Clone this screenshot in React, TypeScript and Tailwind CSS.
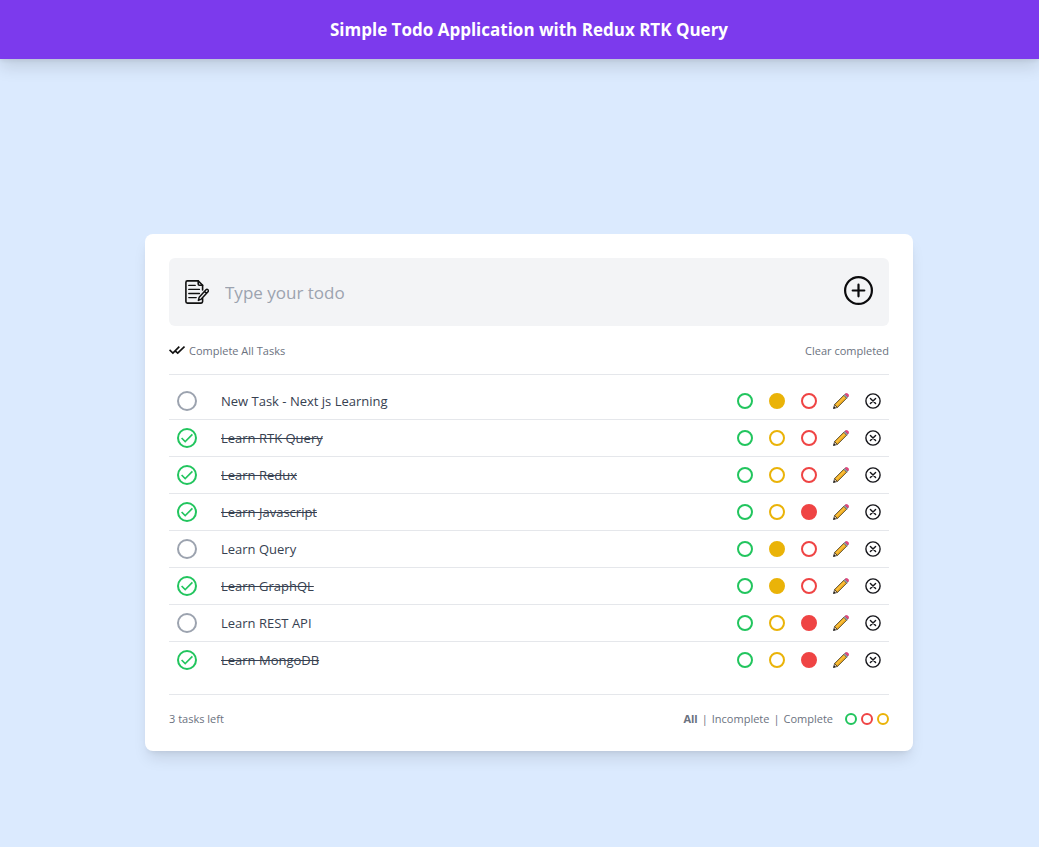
import { useState } from "react";

type Priority = "green" | "yellow" | "red";

interface Todo {
  id: number;
  text: string;
  completed: boolean;
  priority?: Priority;
}

const initialTodos: Todo[] = [
  { id: 1, text: "New Task - Next js Learning", completed: false, priority: "yellow" },
  { id: 2, text: "Learn RTK Query", completed: true },
  { id: 3, text: "Learn Redux", completed: true },
  { id: 4, text: "Learn Javascript", completed: true, priority: "red" },
  { id: 5, text: "Learn Query", completed: false, priority: "yellow" },
  { id: 6, text: "Learn GraphQL", completed: true, priority: "yellow" },
  { id: 7, text: "Learn REST API", completed: false, priority: "red" },
  { id: 8, text: "Learn MongoDB", completed: true, priority: "red" },
];

const ring: Record<Priority, string> = {
  green: "border-[#22c55e]",
  yellow: "border-[#eab308]",
  red: "border-[#ef4444]",
};

const fill: Record<Priority, string> = {
  green: "bg-[#22c55e]",
  yellow: "bg-[#eab308]",
  red: "bg-[#ef4444]",
};

const rowPriorities: Priority[] = ["green", "yellow", "red"];
const filterPriorities: Priority[] = ["green", "red", "yellow"];

function NotesIcon() {
  return (
    <svg className="size-6 shrink-0" viewBox="0 0 24 24" fill="none" stroke="#111" strokeWidth="1.6" strokeLinejoin="round" strokeLinecap="round" aria-hidden="true">
      <path d="M17.6 10V5.2L13.2.9H2.4A1.5 1.5 0 0 0 .9 2.4v19.2a1.5 1.5 0 0 0 1.5 1.5h13.7a1.5 1.5 0 0 0 1.5-1.5v-3" />
      <path d="M13.2.9v3a1.3 1.3 0 0 0 1.3 1.3h3.1" />
      <path d="M3.8 5.4h6.4M3.8 9.4h10.6M3.8 13.5h10.6M3.8 17.6h7.4" strokeWidth="1.4" />
      <path d="M21 9.8a1.3 1.3 0 0 1 2 1.9l-6.7 7.4-2.9 1.3.8-3.1zM19.5 11.5l1.9 1.8" strokeWidth="1.5" />
    </svg>
  );
}

function PlusIcon() {
  return (
    <svg className="size-8" viewBox="0 0 32 32" fill="none" stroke="#0b0b0d" strokeWidth="2.2" strokeLinecap="round" aria-hidden="true">
      <circle cx="16.5" cy="16.5" r="13.4" />
      <path d="M16.5 10.7v11.6M10.7 16.5h11.6" />
    </svg>
  );
}

function DoubleTickIcon() {
  return (
    <svg className="size-4" viewBox="0 0 16 16" fill="none" stroke="#111" strokeWidth="1.7" aria-hidden="true">
      <path d="M.5 6.9 3.9 10.1 10.3 3.7M6.7 8.4 8.7 10.1 15.5 3.5" />
    </svg>
  );
}

function CheckIcon() {
  return (
    <svg className="size-3 fill-[#22c55e]" viewBox="0 0 20 20" aria-hidden="true">
      <path d="M0 11l2-2 5 5L18 3l2 2L7 18z" />
    </svg>
  );
}

function PencilIcon() {
  return (
    <svg className="size-4" viewBox="0 0 16 16" strokeLinejoin="round" aria-hidden="true">
      <path d="M.4 15.6 1.6 11.6 4.4 14.4z" fill="#f2d3ae" stroke="#2b2b2b" strokeWidth=".7" />
      <path d="M.3 15.7 1 13.3 2.7 15z" fill="#1c1c1c" />
      <path d="M1.6 11.5 10.8 2.3l2.9 2.9-9.2 9.2z" fill="#f3ae22" stroke="#3b3420" strokeWidth=".8" />
      <path d="M2.9 12.6 12 3.5" stroke="#ffd45e" strokeWidth=".9" />
      <path d="m10.8 2.3 1.2-1.2L14.9 4l-1.2 1.2z" fill="#9ba3ab" stroke="#4b4f55" strokeWidth=".5" />
      <path d="m12 1.1.5-.5a1.4 1.4 0 0 1 1.9 0l1 1a1.4 1.4 0 0 1 0 1.9l-.5.5z" fill="#f0437f" stroke="#a02a57" strokeWidth=".4" />
    </svg>
  );
}

function CancelIcon() {
  return (
    <svg className="size-4" viewBox="0 0 16 16" fill="none" stroke="#15151a" strokeWidth="1.4" strokeLinecap="round" aria-hidden="true">
      <circle cx="8" cy="8" r="7.1" />
      <path d="m5.4 5.4 5.2 5.2M10.6 5.4l-5.2 5.2" />
    </svg>
  );
}

export default function App() {
  const [todos, setTodos] = useState(initialTodos);
  const [draft, setDraft] = useState("");
  const [status, setStatus] = useState("All");

  const update = (id: number, change: Partial<Todo>) =>
    setTodos((list) => list.map((t) => (t.id === id ? { ...t, ...change } : t)));

  const addTodo = (event: React.FormEvent) => {
    event.preventDefault();
    if (!draft.trim()) return;
    setTodos((list) => [...list, { id: Date.now(), text: draft.trim(), completed: false }]);
    setDraft("");
  };

  const visible = todos.filter(
    (t) => status === "All" || (status === "Complete" ? t.completed : !t.completed),
  );

  return (
    <div className="flex min-h-screen flex-col bg-[#dbeafe] font-['Open_Sans','Noto_Sans',sans-serif] text-[#374151]">
      <header className="bg-[#7c3aed] py-4 pl-[19px] text-center shadow-[0_8px_16px_rgb(0_0_0/0.12),0_2px_4px_rgb(0_0_0/0.06)]">
        <h1 className="text-[17px] leading-[27px] font-bold text-white">
          Simple Todo Application with Redux RTK Query
        </h1>
      </header>

      <main className="flex flex-1 items-center justify-center pt-[79px] pl-[19px]">
        <section className="w-full max-w-3xl rounded-lg bg-white p-6 shadow-lg">
          <form onSubmit={addTodo} className="flex items-center gap-4 rounded-md bg-[#f3f4f6] p-4">
            <NotesIcon />
            <input
              type="text"
              aria-label="New todo"
              placeholder="Type your todo"
              value={draft}
              onChange={(e) => setDraft(e.target.value)}
              className="h-9 min-w-0 flex-1 bg-transparent text-[17px] text-[#6b7280] outline-none placeholder:text-[#9ca3af]"
            />
            <button type="submit" aria-label="Add todo" className="-mr-px mb-1">
              <PlusIcon />
            </button>
          </form>

          <div className="flex justify-between border-b border-[#e5e7eb] pt-[17px] pb-[15px] text-[11px] leading-4 text-[#6b7280]">
            <button
              type="button"
              className="flex items-center gap-1"
              onClick={() => setTodos((list) => list.map((t) => ({ ...t, completed: true })))}
            >
              <DoubleTickIcon />
              Complete All Tasks
            </button>
            <button type="button" onClick={() => setTodos((list) => list.filter((t) => !t.completed))}>
              Clear completed
            </button>
          </div>

          <ul className="divide-y divide-[#e5e7eb] pt-2 pb-4">
            {visible.map((todo) => (
              <li key={todo.id} className="flex items-center gap-4 p-2">
                <label
                  className={
                    "mr-2 flex size-5 shrink-0 items-center justify-center rounded-full border-2 bg-white " +
                    (todo.completed ? "border-[#22c55e]" : "border-[#9ca3af]")
                  }
                >
                  <input
                    type="checkbox"
                    aria-label={todo.text}
                    className="sr-only"
                    checked={todo.completed}
                    onChange={() => update(todo.id, { completed: !todo.completed })}
                  />
                  {todo.completed && <CheckIcon />}
                </label>
                <span className={"min-w-0 flex-1 text-[13px] leading-5 " + (todo.completed ? "line-through" : "")}>
                  {todo.text}
                </span>
                {rowPriorities.map((p) => (
                  <button
                    key={p}
                    type="button"
                    aria-label={"Mark " + p}
                    onClick={() => update(todo.id, { priority: p })}
                    className={"size-4 shrink-0 rounded-full border-2 " + ring[p] + " " + (todo.priority === p ? fill[p] : "")}
                  />
                ))}
                <button type="button" aria-label="Edit">
                  <PencilIcon />
                </button>
                <button
                  type="button"
                  aria-label="Delete"
                  onClick={() => setTodos((list) => list.filter((t) => t.id !== todo.id))}
                >
                  <CancelIcon />
                </button>
              </li>
            ))}
          </ul>

          <footer className="flex justify-between border-t border-[#e5e7eb] pt-4 text-[11px] leading-4 text-[#6b7280]">
            <p>{todos.filter((t) => !t.completed).length} tasks left</p>
            <div className="flex items-center gap-1">
              {["All", "Incomplete", "Complete"].map((name, i) => (
                <div key={name} className="flex gap-1">
                  {i > 0 && <span>|</span>}
                  <button type="button" onClick={() => setStatus(name)} className={status === name ? "font-bold" : ""}>
                    {name}
                  </button>
                </div>
              ))}
              <div className="ml-2 flex gap-1">
                {filterPriorities.map((p) => (
                  <button key={p} type="button" aria-label={"Filter " + p} className={"size-3 rounded-full border-2 " + ring[p]} />
                ))}
              </div>
            </div>
          </footer>
        </section>
      </main>
    </div>
  );
}
